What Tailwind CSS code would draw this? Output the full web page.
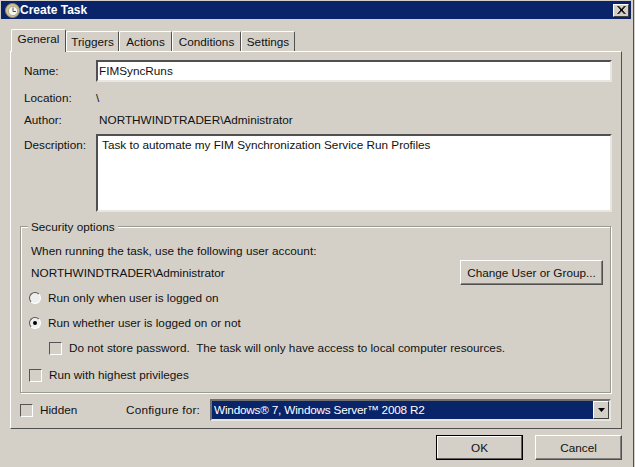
<!DOCTYPE html>
<html lang="en">
<head>
<meta charset="UTF-8">
<title>Create Task</title>
<script src="https://cdn.jsdelivr.net/npm/@tailwindcss/browser@4"></script>
</head>
<body class="w-[635px] h-[467px] overflow-hidden bg-[#d4d0c8] text-[11.75px] leading-[14px] text-[#111] font-['Liberation_Sans',sans-serif]">
  <div class="w-[634px] h-[467px] flex flex-col border-r border-[#505050]">
    <!-- title bar -->
    <div class="mt-[1px] ml-[1px] mr-[2px] h-[18px] bg-[#0a246a] flex items-center pl-[4px] pr-[2px]">
      <svg class="w-[15px] h-[15px]" viewBox="0 0 15 15">
        <circle cx="7.5" cy="7.5" r="7" fill="#d9c48c" stroke="#8d8a78"/>
        <circle cx="8" cy="8" r="4.7" fill="#f5f5ee" stroke="#a8a898"/>
        <path d="M8 4.5V8.5H11" stroke="#555" fill="none"/>
      </svg>
      <span class="text-white font-bold text-[12px]">Create Task</span>
      <div class="ml-auto w-[16px] h-[13px] bg-[#d4d0c8] border border-t-white border-l-white border-r-[#404040] border-b-[#404040] flex items-center justify-center">
        <svg class="w-[9px] h-[8px]" viewBox="0 0 9 8"><path d="M0.5 0L7.5 8M1.5 0L8.5 8M7.5 0L0.5 8M8.5 0L1.5 8" stroke="#000" fill="none"/></svg>
      </div>
    </div>

    <!-- tabs -->
    <div class="flex items-end pl-[11px] h-[32px]">
      <div class="w-[55px] h-[23px] border border-b-0 border-white border-r-[#505050] rounded-t-[2px] text-center pt-[2px] -mb-[1px] z-10 bg-[#d4d0c8]">General</div>
      <div class="w-[53px] h-[20px] border border-b-0 border-white border-r-[#505050] rounded-t-[2px] text-center pt-[3px]">Triggers</div>
      <div class="w-[53px] h-[20px] border border-b-0 border-white border-r-[#505050] rounded-t-[2px] text-center pt-[3px]">Actions</div>
      <div class="w-[69px] h-[20px] border border-b-0 border-white border-r-[#505050] rounded-t-[2px] text-center pt-[3px]">Conditions</div>
      <div class="w-[54px] h-[20px] border border-b-0 border-white border-r-[#505050] rounded-t-[2px] text-center pt-[3px]">Settings</div>
    </div>

    <!-- tab panel -->
    <div class="ml-[10px] w-[612px] h-[378px] border border-t-white border-l-white border-r-[#505050] border-b-[#505050] pl-[13px] pt-[8px]">
      <div class="flex items-center h-[22px]">
        <span class="w-[72px]">Name:</span>
        <div class="w-[516px] h-[22px] bg-white border-2 border-t-[#505050] border-l-[#505050] border-r-[#e8e6e0] border-b-[#e8e6e0] pl-[1px] leading-[18px]">FIMSyncRuns</div>
      </div>
      <div class="flex items-center h-[14px] mt-[9px]"><span class="w-[72px]">Location:</span><span>\</span></div>
      <div class="flex items-center h-[14px] mt-[8px]"><span class="w-[75px]">Author:</span><span>NORTHWINDTRADER\Administrator</span></div>
      <div class="flex mt-[7px]">
        <span class="w-[72px] pt-[4px]">Description:</span>
        <div class="w-[516px] h-[78px] bg-white border-2 border-t-[#505050] border-l-[#505050] border-r-[#e8e6e0] border-b-[#e8e6e0] pl-[4px] pt-[2px]">Task to automate my FIM Synchronization Service Run Profiles</div>
      </div>

      <!-- security options -->
      <div class="relative mt-[14px] -ml-[4px] w-[591px] h-[167px] border border-[#9a9a94] shadow-[1px_1px_0_#fff,inset_1px_1px_0_#fff] pl-[10px] pt-[17px]">
        <span class="absolute -top-[7px] left-[7px] px-[3px] bg-[#d4d0c8]">Security options</span>
        <div>When running the task, use the following user account:</div>
        <div class="flex items-center mt-[2px] h-[25px] justify-between pr-[7px]">
          <span>NORTHWINDTRADER\Administrator</span>
          <button class="w-[143px] h-[25px] whitespace-nowrap border border-t-white border-l-white border-r-[#505050] border-b-[#505050] shadow-[inset_-1px_-1px_0_#808080]">Change User or Group...</button>
        </div>
        <label class="flex items-center mt-[6px] -ml-[2px] h-[14px]"><span class="w-[12px] h-[12px] rounded-full bg-[#eeeeee] border border-[#555] border-r-white border-b-white"></span><span class="ml-[7px]">Run only when user is logged on</span></label>
        <label class="flex items-center mt-[11px] -ml-[2px] h-[14px]"><span class="w-[12px] h-[12px] rounded-full bg-[#eeeeee] border border-[#555] border-r-white border-b-white flex items-center justify-center"><span class="w-[4px] h-[4px] rounded-full bg-black"></span></span><span class="ml-[7px]">Run whether user is logged on or not</span></label>
        <label class="flex items-center mt-[11px] ml-[18px] h-[14px]"><span class="w-[13px] h-[13px] border border-t-[#555] border-l-[#555] border-r-white border-b-white"></span><span class="ml-[7px]">Do not store password.&nbsp; The task will only have access to local computer resources.</span></label>
        <label class="flex items-center mt-[13px] -ml-[2px] h-[14px]"><span class="w-[13px] h-[13px] border border-t-[#555] border-l-[#555] border-r-white border-b-white"></span><span class="ml-[7px]">Run with highest privileges</span></label>
      </div>

      <!-- bottom row -->
      <div class="flex items-center mt-[6px] -ml-[4px] w-[591px] h-[22px]">
        <span class="w-[13px] h-[13px] border border-t-[#555] border-l-[#555] border-r-white border-b-white"></span>
        <span class="ml-[7px] w-[86px]">Hidden</span>
        <span class="w-[84px] tracking-[0.2px]">Configure for:</span>
        <div class="flex-1 h-[22px] border-2 border-t-[#707070] border-l-[#707070] border-r-[#e8e6e0] border-b-[#e8e6e0] flex">
          <div class="flex-1 bg-[#0a246a] text-white pl-[2px] leading-[18px] tracking-[-0.2px]">Windows® 7, Windows Server™ 2008 R2</div>
          <div class="w-[16px] flex items-center justify-center bg-[#d4d0c8] border border-t-white border-l-white border-r-[#404040] border-b-[#404040]">
            <svg class="w-[7px] h-[4px]" viewBox="0 0 7 4"><path d="M0 0H7L3.5 4Z" fill="#000"/></svg>
          </div>
        </div>
      </div>
    </div>

    <!-- dialog buttons -->
    <div class="flex justify-end gap-[12px] pr-[11px] pt-[6px]">
      <button class="w-[87px] h-[25px] border border-black shadow-[inset_-1px_-1px_0_#606060,inset_1px_1px_0_#fff]">OK</button>
      <button class="w-[87px] h-[25px] border border-t-white border-l-white border-r-[#505050] border-b-[#505050] shadow-[inset_-1px_-1px_0_#808080]">Cancel</button>
    </div>
  </div>
</body>
</html>
